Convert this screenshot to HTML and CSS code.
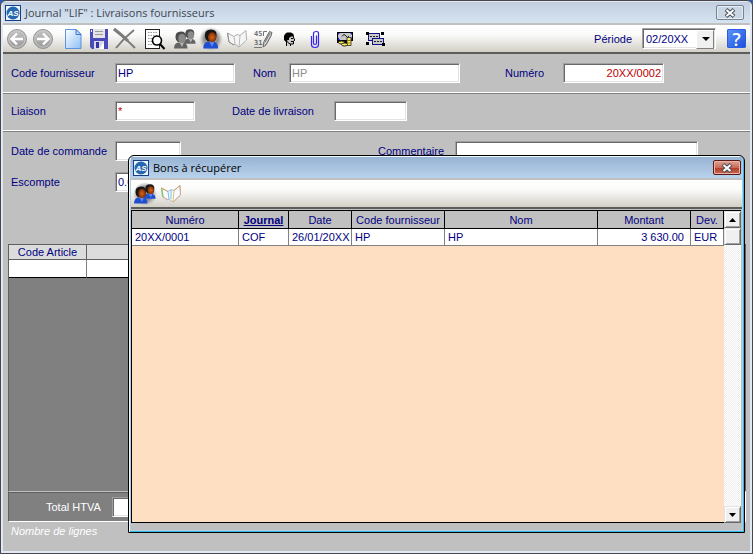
FILE: index.html
```html
<!DOCTYPE html>
<html lang="fr">
<head>
    <meta charset="UTF-8">
    <meta name="viewport" content="width=device-width, initial-scale=1.0">
    <title>Livraisons fournisseurs</title>
    <link rel="stylesheet" href="styles.css">
</head>
<body>
    <!-- shared drawings -->
    <svg class="defs" width="0" height="0" aria-hidden="true">
        <defs>
            <linearGradient id="gPage" x1="0" y1="0" x2="1" y2="1">
                <stop offset="0" stop-color="#ffffff"/>
                <stop offset="1" stop-color="#8cc0f4"/>
            </linearGradient>
            <linearGradient id="gGrey" x1="0" y1="0" x2="0" y2="1">
                <stop offset="0" stop-color="#c4c4c4"/>
                <stop offset="1" stop-color="#9a9a9a"/>
            </linearGradient>
            <radialGradient id="gFace">
                <stop offset="0" stop-color="#d8641c"/>
                <stop offset="1" stop-color="#803008"/>
            </radialGradient>
            <radialGradient id="gHalo">
                <stop offset="0.6" stop-color="#7c7c7c" stop-opacity="0.8"/>
                <stop offset="1" stop-color="#a0a0a0" stop-opacity="0"/>
            </radialGradient>
            <symbol id="logo" viewBox="0 0 16 16">
                <rect width="16" height="16" fill="#173f87"/>
                <rect x="1" y="1" width="14" height="14" fill="#eef4fb"/>
                <circle cx="8" cy="8" r="6.5" fill="#2668b0"/>
                <text x="8" y="11" font-family="Liberation Sans, sans-serif" font-size="8" font-style="italic" font-weight="bold" text-anchor="middle" fill="#ffffff">AS</text>
            </symbol>
            <symbol id="cross" viewBox="0 0 12 10">
                <path d="M2 1.5L10 8.5M10 1.5L2 8.5" stroke="#4a5058" stroke-width="4"/>
                <path d="M2.5 2L9.5 8M9.5 2L2.5 8" stroke="#ffffff" stroke-width="2"/>
            </symbol>
            <symbol id="arrow" viewBox="0 0 24 24">
                <circle cx="12" cy="12" r="9.5" fill="url(#gGrey)" stroke="#939393"/>
                <circle cx="12" cy="12" r="8.2" fill="none" stroke="#cfcfcf" stroke-width="0.8"/>
                <path d="M18 12H7M12 6.5L6.5 12L12 17.5" fill="none" stroke="#ffffff" stroke-width="2.4"/>
            </symbol>
            <symbol id="man" viewBox="0 0 14 18">
                <path class="coat" d="M0 17.5Q0 12.5 4 11.5L9.5 11.5Q13.5 12.5 13.5 17.5Z"/>
                <path class="shirt" d="M5.5 11.5L8 16L10 11.5Z"/>
                <path class="hair" d="M1.5 6.5Q1 0.5 7 0.5Q12.5 0.5 12 6Q12 9 10 11L4 11Q1.5 9.5 1.5 6.5Z"/>
                <ellipse class="face" cx="8" cy="7.5" rx="3.7" ry="4.5"/>
            </symbol>
        </defs>
    </svg>

    <div class="window">
        <header class="title-bar">
            <svg class="logo"><use href="#logo"/></svg>
            <h1>Journal "LIF" : Livraisons fournisseurs</h1>
            <button class="close" type="button" aria-label="Fermer"><svg width="12" height="10"><use href="#cross"/></svg></button>
        </header>

        <div class="toolbar">
            <div class="tools">
                <button type="button" aria-label="Précédent"><svg><use href="#arrow"/></svg></button>
                <button type="button" aria-label="Suivant"><svg class="flip"><use href="#arrow"/></svg></button>
            </div>
            <div class="tools">
                <button type="button" aria-label="Nouveau">
                    <svg viewBox="0 0 24 24">
                        <path d="M4.5 2.5H15L20 7.5V21.5H4.5Z" fill="url(#gPage)" stroke="#5d93d8"/>
                        <path d="M15 2.5V7.5H20Z" fill="#b9d9fa" stroke="#3f78c8"/>
                    </svg>
                </button>
                <button type="button" aria-label="Enregistrer">
                    <svg viewBox="0 0 24 24">
                        <path d="M3 2H21V22H5L3 20Z" fill="#4a4ab8"/>
                        <rect x="6" y="2" width="12" height="9" fill="#e4e4e4"/>
                        <path d="M8 4.500H16M8 7.500H16" stroke="#9a9a9a"/>
                        <rect x="4" y="3" width="1" height="2" fill="#fff"/>
                        <rect x="7" y="14" width="10" height="8" fill="#d9d9e6"/>
                        <rect x="9" y="15" width="3" height="6" fill="#3434a4"/>
                        <path d="M12 22L17 15V22Z" fill="#fff"/>
                    </svg>
                </button>
                <button type="button" aria-label="Supprimer">
                    <svg viewBox="0 0 24 24">
                        <path d="M1 2Q10 9 22 21M21 3Q11 11 3 21" fill="none" stroke="#7c7c7c" stroke-width="2"/>
                        <path d="M1 2Q10 9 15 14" fill="none" stroke="#7c7c7c" stroke-width="3"/>
                    </svg>
                </button>
            </div>
            <div class="tools">
                <button type="button" aria-label="Aperçu">
                    <svg viewBox="0 0 24 24">
                        <rect x="2.5" y="2.5" width="14" height="19" fill="#fff" stroke="#222"/>
                        <path d="M5 5.5H14M5 8.5H14M5 11.5H9M5 14.5H9M5 17.5H12" stroke="#999" stroke-dasharray="1.5 1"/>
                        <circle cx="14" cy="13.5" r="4.5" fill="#fff" stroke="#000" stroke-width="1.6"/>
                        <path d="M17 17L21.5 22" stroke="#000" stroke-width="2"/>
                    </svg>
                </button>
            </div>
            <div class="tools">
                <button type="button" aria-label="Fournisseurs">
                    <svg class="grey" viewBox="0 0 24 24">
                        <use href="#man" x="11" y="1" width="12" height="17"/>
                        <use href="#man" x="1" y="4" width="14" height="18"/>
                    </svg>
                </button>
                <button type="button" aria-label="Fournisseur">
                    <svg viewBox="0 0 24 24">
                        <circle cx="12" cy="12" r="12" fill="url(#gHalo)"/>
                        <use href="#man" x="4" y="2" width="16" height="20"/>
                    </svg>
                </button>
                <button type="button" aria-label="Catalogue">
                    <svg viewBox="0 0 24 24">
                        <path d="M2.5 6L9 9.5L12 7.5L15 8.5L21 3.5L21.5 13L14 20L10 17L9 18L4 15Z" fill="#f5f5f5" stroke="#b0b0b0"/>
                        <path d="M9 9.5L10 17M15 8.5L14 20" stroke="#b8b8b8" fill="none"/>
                        <path d="M2.5 6L4 15L9 18" stroke="#8e8e8e" fill="none"/>
                    </svg>
                </button>
                <button type="button" aria-label="Numérotation">
                    <svg viewBox="0 0 24 24">
                        <text x="3" y="9" font-family="DejaVu Sans Mono, monospace" font-size="7" font-weight="bold" fill="#6c6c6c">45</text>
                        <text x="3" y="18" font-family="DejaVu Sans Mono, monospace" font-size="7" font-weight="bold" fill="#6c6c6c">31</text>
                        <path d="M12.500 9V4.500H16M3 20.500H11" fill="none" stroke="#777"/>
                        <path d="M12 20L13 14.5L18.5 4.5L21 5.5L20 9L15 18Z" fill="#c9c9c9" stroke="#666"/>
                        <path d="M14 15L19 6" stroke="#777"/>
                    </svg>
                </button>
                <button type="button" aria-label="Contact">
                    <svg viewBox="0 0 24 24">
                        <path d="M10 9L14 8L16 10L17 12.500L16 14V17H13L12 19L10 18Z" fill="#c8c8c8"/>
                        <path d="M7 9L8 7L10 5.5H14L16.5 7V9.500H14L12 11V13H10L11 15.500L9 15L7 13Z" fill="#000"/>
                        <path d="M16 8L17 12L18 13L16.5 14V17H13L11 15.500M9.500 15V19M13.500 17V19" fill="none" stroke="#000"/>
                        <path d="M14 11.5H16M14 14.5H16" stroke="#000"/>
                    </svg>
                </button>
                <button type="button" aria-label="Pièces jointes">
                    <svg viewBox="0 0 24 24">
                        <path d="M8.5 9V17.5Q8.5 20.5 12 20.5Q15.500 20.5 15.5 17.5V6.5Q15.5 4.5 13.500 4.5Q10.500 4.5 10.5 6.5V16Q10.5 17.5 12 17.5Q13.5 17.5 13.5 16V8.5" fill="none" stroke="#3322ee" stroke-width="1.2"/>
                    </svg>
                </button>
            </div>
            <div class="tools">
                <button type="button" aria-label="Paiement">
                    <svg viewBox="0 0 24 24">
                        <path d="M4 5H20V14H18L16 16H4Z" fill="#000"/>
                        <path d="M5 6H19V13H5Z" fill="#1d1dd0"/>
                        <path d="M7 6H17L19 8V10L17 13H7L5 10V8Z" fill="#c8c8c8"/>
                        <path d="M9 9.5Q11 6 13 9Q14 12 16 9" fill="none" stroke="#222"/>
                        <path d="M14 10.5H18V18.5H14Z" fill="#ffee55" stroke="#222" stroke-width="0.8"/>
                        <path d="M14 13.5H18M14 16H18" stroke="#8d7a10"/>
                        <ellipse cx="8.5" cy="15.5" rx="3" ry="1.500" fill="#ffee55" stroke="#222"/>
                        <ellipse cx="11.5" cy="17.5" rx="3" ry="1.500" fill="#ffee55" stroke="#222"/>
                    </svg>
                </button>
            </div>
            <div class="tools">
                <button type="button" aria-label="Regrouper">
                    <svg viewBox="0 0 24 24">
                        <rect x="5.5" y="6.5" width="11" height="7" fill="#c8c8c8" stroke="#111188"/>
                        <rect x="9.5" y="11.5" width="11" height="6" fill="#c8c8c8" stroke="#111188"/>
                        <path d="M7 9.500H15M11 14.500H19" stroke="#222" stroke-dasharray="2 1"/>
                        <path d="M3 5H6V8H3ZM18 5H21V8H18ZM3 15H6V18H3ZM19 16H22V19H19Z" fill="#000"/>
                    </svg>
                </button>
            </div>
            <label class="period-label" for="periode">Période</label>
            <div class="select-box">
                <select id="periode"><option>02/20XX</option></select>
            </div>
            <button class="help" type="button" aria-label="Aide">?</button>
        </div>

        <main class="form">
            <div class="row row-supplier">
                <label for="code">Code fournisseur</label>
                <input id="code" class="w-code" type="text" value="HP">
                <label for="nom">Nom</label>
                <input id="nom" class="w-name muted" type="text" value="HP" readonly>
                <label for="numero">Numéro</label>
                <input id="numero" class="number" type="text" value="20XX/0002">
            </div>
            <div class="row row-link">
                <label for="liaison">Liaison</label>
                <input id="liaison" class="w-link red" type="text" value="*">
                <label for="livraison">Date de livraison</label>
                <input id="livraison" type="text">
            </div>
            <div class="row row-order">
                <label for="commande">Date de commande</label>
                <input id="commande" class="w-date" type="text">
                <label for="commentaire">Commentaire</label>
                <input id="commentaire" type="text">
                <label for="escompte">Escompte</label>
                <input id="escompte" class="w-date" type="text" value="0.00">
            </div>

            <div class="articles">
                <table>
                    <thead>
                        <tr><th class="col-article">Code Article</th><th></th></tr>
                    </thead>
                    <tbody>
                        <tr><td></td><td></td></tr>
                    </tbody>
                </table>
            </div>
            <div class="totals">
                <label for="total">Total HTVA</label>
                <input id="total" type="text">
            </div>
            <p class="status">Nombre de lignes</p>
        </main>
    </div>

    <section class="dialog" role="dialog" aria-labelledby="dialogTitle">
        <header class="title-bar">
            <svg class="logo"><use href="#logo"/></svg>
            <h2 id="dialogTitle">Bons à récupérer</h2>
            <button class="close" type="button" aria-label="Fermer"><svg width="12" height="10"><use href="#cross"/></svg></button>
        </header>
        <div class="toolbar">
            <div class="tools">
                <button type="button" aria-label="Fournisseurs">
                    <svg viewBox="0 0 24 24">
                        <circle cx="12" cy="12" r="12" fill="url(#gHalo)"/>
                        <use href="#man" x="11" y="1" width="12" height="17"/>
                        <use href="#man" x="1" y="4" width="14" height="18"/>
                    </svg>
                </button>
                <button type="button" aria-label="Catalogue">
                    <svg viewBox="0 0 24 24">
                        <path d="M2.5 6L9 9.5L12 7.5L15 8.5L21 3.5L21.5 13L14 20L10 17L9 18L4 15Z" fill="#f6fbff" stroke="#9cc4dc"/>
                        <path d="M2.5 6L4 15" stroke="#8cc468" stroke-width="1.5"/>
                        <path d="M2.5 6L9 9.5M15 8.5L21 3.5" stroke="#e89858"/>
                        <path d="M4 15L9 18M21 3.5L21.5 13L14 20" fill="none" stroke="#e4a880"/>
                        <path d="M9 9.5L10 17M12 8V17" stroke="#78bce4"/>
                        <path d="M15 8.5L14 20" stroke="#e4c068"/>
                    </svg>
                </button>
            </div>
        </div>
        <div class="list">
            <div class="list-body">
                <table>
                    <thead>
                        <tr>
                            <th class="col-num">Numéro</th>
                            <th class="col-journal sorted">Journal</th>
                            <th class="col-date">Date</th>
                            <th class="col-code">Code fournisseur</th>
                            <th>Nom</th>
                            <th class="col-amount">Montant</th>
                            <th class="col-cur">Dev.</th>
                        </tr>
                    </thead>
                    <tbody>
                        <tr>
                            <td>20XX/0001</td>
                            <td>COF</td>
                            <td>26/01/20XX</td>
                            <td>HP</td>
                            <td>HP</td>
                            <td class="amount">3 630.00</td>
                            <td>EUR</td>
                        </tr>
                    </tbody>
                </table>
            </div>
            <div class="scrollbar">
                <button type="button" aria-label="Monter"><svg width="7" height="4"><path d="M0 4L3.5 0L7 4Z"/></svg></button>
                <div class="thumb"></div>
                <button class="down" type="button" aria-label="Descendre"><svg width="7" height="4"><path d="M0 0L3.5 4L7 0Z"/></svg></button>
            </div>
        </div>
    </section>
</body>
</html>
```

FILE: styles.css
```css
* {
    box-sizing: border-box;
    margin: 0;
    padding: 0;
}
body {
    position: relative;
    min-height: 100vh;
    background-color: #2a5cb8;
    font-family: "Liberation Sans", Arial, sans-serif;
    font-size: 11px;
    line-height: 14px;
    color: #000080;
}
input, select, button {
    font: inherit;
    color: inherit;
}
.defs {
    position: absolute;
}

/* main window */
.window {
    display: flex;
    flex-direction: column;
    min-height: 100vh;
    padding: 1px 2px 2px;
    background-color: #dfe8f3;
    border: 1px solid #4a464c;
    border-radius: 6px 6px 0 0;
}
.title-bar {
    display: flex;
    align-items: center;
    height: 21px;
    padding: 0 6px 0 2px;
    background: linear-gradient(#c1cfe0, #d6e4f2);
}
.title-bar h1, .title-bar h2 {
    flex: 1;
    margin-left: 4px;
    font-family: "Open Sans", "Noto Sans", sans-serif;
    font-size: 11px;
    font-weight: normal;
    line-height: 16px;
    color: #3f4650;
}
.logo {
    width: 16px;
    height: 16px;
}
.close {
    display: flex;
    align-items: center;
    justify-content: center;
    width: 28px;
    height: 15px;
    background-color: #c9d6e4;
    border: 1px solid #78818c;
    border-radius: 2px;
    box-shadow: inset 0 0 0 1px #e4edf6;
}
.close svg, .scrollbar svg {
    display: block;
}

/* toolbars */
.toolbar {
    display: flex;
    align-items: center;
    height: 31px;
    padding: 0 4px 0 1px;
    background: linear-gradient(#ffffff, #fbfbfa 35%, #d2cfc6);
    border-top: 2px solid #c0c0c0;
    border-bottom: 2px solid #5c5c5a;
}
.tools {
    display: flex;
    margin-right: 4px;
}
.tools button {
    display: flex;
    align-items: center;
    justify-content: center;
    width: 26px;
    height: 26px;
    background: none;
    border: none;
}
.tools svg {
    width: 24px;
    height: 24px;
}
.flip {
    transform: scaleX(-1);
}
.hair {
    fill: var(--hair, #161616);
}
.face {
    fill: var(--face, url(#gFace));
}
.coat {
    fill: var(--coat, #1f4fd0);
}
.shirt {
    fill: var(--shirt, #5f8cf0);
}
.grey {
    --hair: #4c4c4c;
    --face: #8a8a8a;
    --coat: #636363;
    --shirt: #b4b4b4;
}
.period-label {
    margin-left: auto;
}
.select-box {
    position: relative;
    margin: 0 11px 0 10px;
}
.select-box select {
    display: block;
    appearance: none;
    width: 74px;
    height: 21px;
    padding: 0 20px 0 3px;
    border-radius: 0;
}
.select-box select, .row input, .totals input {
    background-color: #ffffff;
    border: 1px solid;
    border-color: #a0a0a0 #ffffff #ffffff #a0a0a0;
    box-shadow: inset 1px 1px #696969, inset -1px -1px #e3e3e3;
}
.select-box::before {
    content: "";
    position: absolute;
    top: 2px;
    right: 2px;
    width: 16px;
    height: 17px;
    background-color: #f0f0f0;
    border: 1px solid;
    border-color: #ffffff #808080 #808080 #ffffff;
    pointer-events: none;
    z-index: 1;
}
.select-box::after {
    content: "";
    position: absolute;
    top: 9px;
    right: 6px;
    border: 4px solid transparent;
    border-top-color: #000000;
    border-bottom: none;
    pointer-events: none;
    z-index: 1;
}
.help {
    width: 19px;
    height: 19px;
    background: linear-gradient(135deg, #5b93f8, #1c50dc);
    border: 1px solid #2a60e0;
    border-radius: 1px;
    color: #ffffff;
    font-family: "Open Sans", sans-serif;
    font-size: 18px;
    font-weight: 600;
    line-height: 16px;
}

/* entry form */
.form {
    display: flex;
    flex: 1;
    flex-direction: column;
    background-color: #c0c0c0;
}
.row {
    display: grid;
    align-items: center;
    padding: 8px 8px 9px;
    border-bottom: 1px solid #ffffff;
    box-shadow: 0 1px #808080;
}
.row input, .totals input {
    width: 100%;
    height: 20px;
    padding: 0 2px;
}
.row-supplier {
    grid-template-columns: 104px 138px 36px 216px 58px 101px;
    padding-top: 9px;
}
.row-link {
    grid-template-columns: 104px 117px 102px 73px;
}
.row-order {
    grid-template-columns: 104px 263px 77px 1fr;
    row-gap: 11px;
    padding: 10px 52px 52px 8px;
    border-bottom: none;
    box-shadow: none;
}
.row .w-code {
    width: 120px;
}
.row .w-name {
    width: 171px;
}
.row .w-link {
    width: 80px;
}
.row .w-date {
    width: 66px;
}
.row .muted {
    color: #8c8c8c;
}
.row .red {
    color: #c00000;
}
.row .number {
    color: #c00000;
    text-align: right;
}
.articles {
    flex: 1;
    margin: 0 4px 0 5px;
    background-color: #808080;
    border: 1px solid #606060;
    border-bottom: none;
}
table {
    width: 100%;
    border-spacing: 0;
    table-layout: fixed;
}
th {
    font-weight: normal;
}
.articles th {
    height: 15px;
    background-color: #dcdcdc;
    border-right: 1px solid #606060;
    border-bottom: 1px solid #606060;
}
.articles td {
    height: 18px;
    background-color: #ffffff;
    border-right: 1px solid #808080;
    border-bottom: 1px solid #000000;
}
.col-article {
    width: 78px;
}
.totals {
    display: flex;
    align-items: center;
    height: 31px;
    margin: 0 4px 0 5px;
    padding-left: 37px;
    background-color: #808080;
    border: 1px solid;
    border-color: #c0c0c0 #ffffff #ffffff #606060;
    box-shadow: inset 0 1px #606060;
    color: #ffffff;
}
.totals input {
    width: 100px;
    margin-left: 11px;
}
.status {
    height: 29px;
    padding: 2px 8px;
    color: #ffffff;
    font-style: italic;
}

/* pick list opened over the form */
.dialog {
    position: absolute;
    top: 155px;
    right: 8px;
    bottom: 21px;
    left: 128px;
    display: flex;
    flex-direction: column;
    padding: 1px 2px 2px;
    background-color: #b4cbe6;
    border: 1px solid #000000;
    border-radius: 6px 6px 0 0;
    box-shadow: inset 1px 1px #f0f8ff, inset -1px -1px #34b8e4;
}
.dialog .title-bar {
    padding-right: 1px;
    background: linear-gradient(#97b3d3, #b9d2ec);
}
.dialog h2 {
    color: #000000;
}
.dialog .close {
    background: linear-gradient(#e0a394, #cb6a55 50%, #b03a22 50%, #cc6650);
    border-color: #5a1a1a;
    box-shadow: inset 0 0 0 1px #e8b4a8;
}
.list {
    display: flex;
    flex: 1;
    padding: 1px 1px 7px 0;
    background-color: #c0c0c0;
}
.list-body {
    flex: 1;
    background-color: #ffdfc1;
    border: 1px solid #000000;
    border-right: none;
}
.list th {
    height: 18px;
    background-color: #c0c0c0;
    border-right: 1px solid #000000;
    border-bottom: 1px solid #000000;
}
.list .sorted {
    font-weight: bold;
    text-decoration: underline;
}
.list td {
    height: 17px;
    padding: 0 3px;
    background-color: #ffffff;
    border-right: 1px solid #808080;
    border-bottom: 1px solid #808080;
    white-space: nowrap;
}
.list .amount {
    padding-right: 6px;
    text-align: right;
}
.col-num {
    width: 107px;
}
.col-journal {
    width: 50px;
}
.col-date {
    width: 63px;
}
.col-code {
    width: 93px;
}
.col-amount {
    width: 93px;
}
.col-cur {
    width: 33px;
}
.scrollbar {
    display: flex;
    flex-direction: column;
    width: 17px;
    border-top: 1px solid #000000;
    background: repeating-conic-gradient(#ffffff 0 25%, #eeeeee 0 50%) 0 0 / 2px 2px;
}
.scrollbar button, .thumb {
    display: flex;
    align-items: center;
    justify-content: center;
    width: 17px;
    height: 17px;
    background-color: #f0f0f0;
    border: 1px solid;
    border-color: #e3e3e3 #696969 #696969 #e3e3e3;
    box-shadow: inset 1px 1px #ffffff, inset -1px -1px #a0a0a0;
}
.scrollbar .down {
    margin-top: auto;
}
```
